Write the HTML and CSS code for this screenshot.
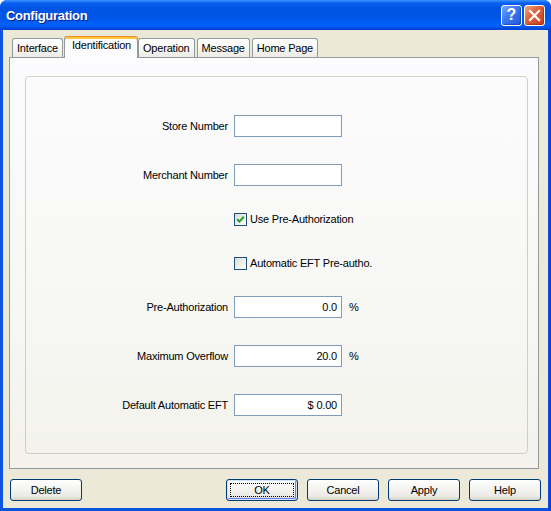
FILE: index.html
```html
<!DOCTYPE html>
<html>
<head>
<meta charset="utf-8">
<title>Configuration</title>
<link rel="stylesheet" href="styles.css">
</head>
<body>
<div class="window">
  <div class="titlebar">
    <span class="title">Configuration</span>
    <span class="tb-btn tb-help">?</span>
    <span class="tb-btn tb-close">
      <svg width="13" height="13" viewBox="0 0 13 13"><path d="M2 2 L11 11 M11 2 L2 11" stroke="#fff" stroke-width="2.2" stroke-linecap="square" fill="none"/></svg>
    </span>
  </div>
  <div class="client">
    <div class="tabs">
      <div class="tab">Interface</div>
      <div class="tab active">Identification</div>
      <div class="tab">Operation</div>
      <div class="tab">Message</div>
      <div class="tab">Home Page</div>
    </div>
    <div class="panel">
      <div class="group">
        <div class="row">
          <span class="label">Store Number</span>
          <input class="field" type="text" value="">
        </div>
        <div class="row">
          <span class="label">Merchant Number</span>
          <input class="field" type="text" value="">
        </div>
        <div class="row check">
          <span class="label"></span>
          <span class="box">
            <svg width="11" height="11" viewBox="0 0 11 11"><path d="M2.2 5.2 L4.4 7.6 L8.8 2.8" stroke="#21A121" stroke-width="2" fill="none"/></svg>
          </span>
          <span>Use Pre-Authorization</span>
        </div>
        <div class="row check">
          <span class="label"></span>
          <span class="box"></span>
          <span>Automatic EFT Pre-autho.</span>
        </div>
        <div class="row">
          <span class="label">Pre-Authorization</span>
          <input class="field num" type="text" value="0.0">
          <span class="unit">%</span>
        </div>
        <div class="row">
          <span class="label">Maximum Overflow</span>
          <input class="field num" type="text" value="20.0">
          <span class="unit">%</span>
        </div>
        <div class="row">
          <span class="label">Default Automatic EFT</span>
          <input class="field num" type="text" value="$ 0.00">
        </div>
      </div>
    </div>
    <div class="buttons">
      <button class="btn">Delete</button>
      <span class="spacer"></span>
      <button class="btn default"><span class="focus">OK</span></button>
      <button class="btn">Cancel</button>
      <button class="btn">Apply</button>
      <button class="btn">Help</button>
    </div>
  </div>
</div>
</body>
</html>
```
FILE: styles.css
```css
* { box-sizing: border-box; }
html, body { margin: 0; padding: 0; }
body {
  width: 551px;
  height: 511px;
  overflow: hidden;
  background: #ffffff;
  font-family: "Liberation Sans", Arial, sans-serif;
  font-size: 11px;
  letter-spacing: -0.2px;
  color: #000;
}
.window {
  width: 551px;
  height: 511px;
  display: flex;
  flex-direction: column;
  background: linear-gradient(90deg, #0831D9 0px, #166AEE 1px, #0855DD 2px, #0855DD 548px, #0831D9 551px);
  border-radius: 7px 7px 0 0;
  overflow: hidden;
}
.titlebar {
  height: 30px;
  flex: none;
  display: flex;
  align-items: center;
  padding: 0 6px 0 6px;
  background: linear-gradient(180deg, #3D95FF 0px, #0A5FF0 3px, #0054E3 8px, #0055EA 18px, #0062FA 25px, #0058EE 27px, #0144D6 29px, #003DD7 30px);
}
.title {
  flex: 1;
  color: #fff;
  font-weight: bold;
  font-size: 13px;
  letter-spacing: -0.3px;
  text-shadow: 1px 1px #0A1E8C;
  padding-top: 1px;
}
.tb-btn {
  width: 21px;
  height: 21px;
  border: 1px solid #fff;
  border-radius: 3px;
  display: flex;
  align-items: center;
  justify-content: center;
  color: #fff;
  letter-spacing: 0;
}
.tb-help {
  margin-right: 2px;
  font-weight: bold;
  font-size: 16px;
  background: linear-gradient(135deg, #7AA8FC 0%, #3C7BF2 40%, #2358DA 100%);
  box-shadow: inset -1px -1px 1px rgba(0, 20, 120, 0.4);
}
.tb-close {
  background: linear-gradient(135deg, #EFA487 0%, #DF6440 40%, #C4401A 100%);
  box-shadow: inset -1px -1px 1px rgba(120, 20, 0, 0.4);
}
.client {
  flex: 1;
  margin: 0 3px 3px 3px;
  background: #ECE9D8;
  display: flex;
  flex-direction: column;
  padding: 0 9px 0 6px;
}
.tabs {
  height: 27px;
  flex: none;
  display: flex;
  align-items: flex-end;
  padding-left: 3px;
  position: relative;
  z-index: 1;
}
.tab {
  height: 19px;
  padding: 0 4px;
  margin-right: 2px;
  border: 1px solid #919B9C;
  border-bottom: none;
  border-radius: 3px 3px 0 0;
  background: linear-gradient(180deg, #FFFFFF 0%, #F7F7F4 50%, #ECEBE5 100%);
  line-height: 18px;
  white-space: nowrap;
}
.tab.active {
  height: 22px;
  margin: 0 0 -1px -1px;
  padding: 0 6px 0 7px;
  border-top: 1px solid #E68B2C;
  box-shadow: inset 0 2px 0 #FFC73C;
  background: #FCFCFE;
  line-height: 17px;
}
.panel {
  height: 412px;
  flex: none;
  border: 1px solid #919B9C;
  background: linear-gradient(180deg, #FCFCFE 0%, #F7F7F4 60%, #F3F2EC 100%);
  padding: 18px 10px 14px 15px;
  display: flex;
}
.group {
  flex: 1;
  border: 1px solid #D0D0BF;
  border-radius: 4px;
  padding-top: 38px;
}
.row {
  display: flex;
  align-items: center;
  height: 22px;
  margin-top: 27px;
}
.row:first-child { margin-top: 0; }
.row.check, .row.check + .row { margin-top: 22px; }
.label {
  width: 202px;
  margin-right: 6px;
  text-align: right;
  flex: none;
}
.field {
  width: 108px;
  height: 22px;
  border: 1px solid #7F9DB9;
  background: #fff;
  padding: 0 4px;
  margin: 0;
  font: inherit;
  letter-spacing: inherit;
  color: #000;
  outline: none;
}
.field.num { text-align: right; }
.unit { margin-left: 7px; }
.box {
  width: 13px;
  height: 13px;
  flex: none;
  border: 1px solid #1C5180;
  background: linear-gradient(135deg, #DCDCD7 0%, #F4F4F1 70%, #FFFFFF 100%);
  margin-right: 3px;
  display: flex;
  align-items: center;
  justify-content: center;
}
.buttons {
  display: flex;
  gap: 9px;
  margin: 10px -2px 0 1px;
  height: 22px;
}
.spacer { flex: 1; }
.btn {
  width: 72px;
  height: 22px;
  margin: 0;
  padding: 0;
  border: 1px solid #003C74;
  border-radius: 3px;
  background: linear-gradient(180deg, #FFFFFF 0%, #F6F6F3 35%, #ECEBE6 80%, #D6D0C5 100%);
  font: inherit;
  letter-spacing: inherit;
  color: #000;
  display: flex;
  align-items: center;
  justify-content: center;
}
.btn.default {
  box-shadow: inset 0 0 0 1px #CEE7FF, inset -1px -1px 0 1px #6982EE;
  padding: 2px;
}
.focus {
  flex: 1;
  align-self: stretch;
  display: flex;
  align-items: center;
  justify-content: center;
  border: 1px dotted #000;
  margin: 1px;
}
```
